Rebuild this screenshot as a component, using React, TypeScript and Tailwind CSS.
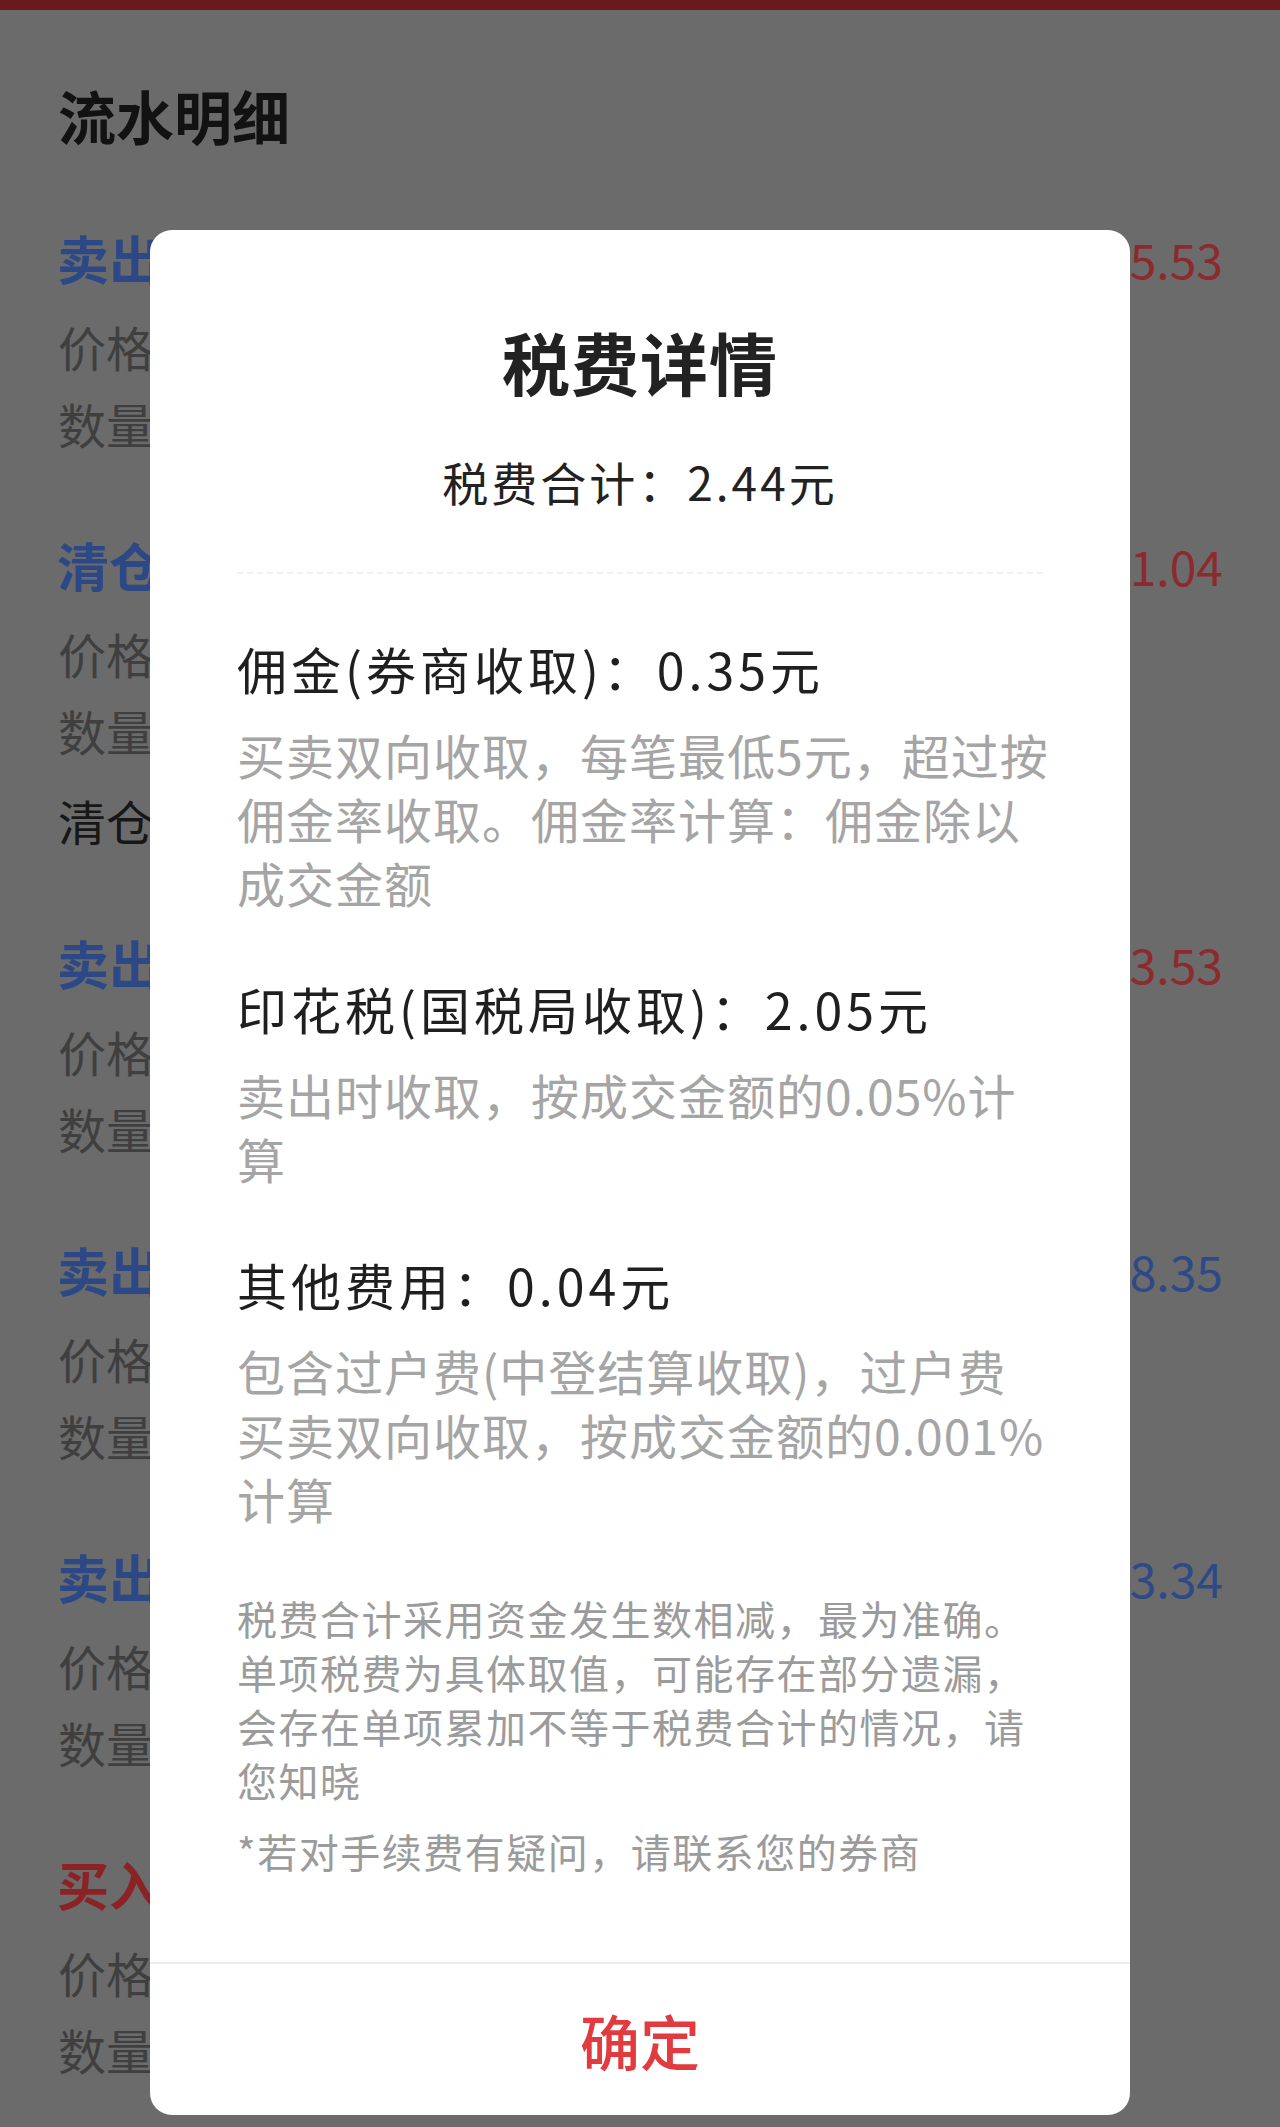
import React from "react";

type Row = {
  type: string;
  color: "blue" | "red";
  amount: string;
  amountColor: "blue" | "red";
  extra?: string;
};

const rows: Row[] = [
  { type: "卖出", color: "blue", amount: "+1,205.53", amountColor: "red" },
  { type: "清仓", color: "blue", amount: "+3,261.04", amountColor: "red", extra: "清仓收益 +126.40" },
  { type: "卖出", color: "blue", amount: "+2,113.53", amountColor: "red" },
  { type: "卖出", color: "blue", amount: "-1,048.35", amountColor: "blue" },
  { type: "卖出", color: "blue", amount: "-2,203.34", amountColor: "blue" },
  { type: "买入", color: "red", amount: "", amountColor: "red" },
];

const font = { fontFamily: '"Noto Sans CJK SC", "Noto Sans", sans-serif' };

function FeeItem({ title, lines }: { title: string; lines: string[] }) {
  return (
    <div>
      <div className="text-[50px] leading-[70px] tracking-[4px] text-[#1f1f1f] whitespace-nowrap">{title}</div>
      <div className="mt-[19px] text-[48px] leading-[64px] tracking-[1px] text-[#a5a5a5]">
        {lines.map((l, i) => (
          <div key={i} className="whitespace-nowrap">
            {l}
          </div>
        ))}
      </div>
    </div>
  );
}

export default function App() {
  return (
    <div className="relative w-[1280px] h-[2127px] overflow-hidden bg-[#6b6b6b]" style={font}>
      {/* page behind the dialog */}
      <div className="h-[10px] bg-[#691a1d]" />
      <div className="h-[200px] pl-[58px] pt-[10px] flex items-center">
        <h1 className="text-[58px] font-bold text-[#121212]">流水明细</h1>
      </div>

      {rows.map((r, i) => (
        <div key={i} className={r.extra ? "pb-[42px]" : "pb-[57px]"}>
          <div className="h-[96px] px-[57px] flex items-center justify-between">
            <span
              className={
                "text-[52px] font-bold " +
                (r.color === "blue" ? "text-[#2c4886]" : "text-[#8a2226]")
              }
            >
              {r.type}
            </span>
            <span
              className={
                "text-[48px] " +
                (r.amountColor === "blue" ? "text-[#2e4a86]" : "text-[#8c2a2e]")
              }
            >
              {r.amount}
            </span>
          </div>
          <div className="h-[80px] pl-[58px] flex items-center text-[48px] text-[#3f3f3f]">
            价格 12.36
          </div>
          <div className="h-[74px] pl-[58px] flex items-center text-[48px] text-[#3f3f3f]">
            数量 100股
          </div>
          {r.extra && (
            <div className="h-[106px] pl-[58px] flex items-center text-[48px] text-[#171717]">
              {r.extra}
            </div>
          )}
        </div>
      ))}

      {/* dialog */}
      <div className="absolute left-[150px] top-[230px] w-[980px] h-[1885px] bg-white rounded-[22px] flex flex-col">
        <div className="pt-[92px] text-center text-[68px] leading-[80px] font-bold tracking-[1px] text-[#222]">
          税费详情
        </div>
        <div className="mt-[49px] text-center text-[46px] leading-[60px] tracking-[3px] text-[#222]">
          税费合计：2.44元
        </div>
        <div className="mt-[61px] mx-[87px] border-t-2 border-dashed border-[#f0f0f0]" />

        <div className="px-[87px] mt-[59px] flex flex-col gap-[59px]">
          <FeeItem
            title="佣金(券商收取)：0.35元"
            lines={["买卖双向收取，每笔最低5元，超过按", "佣金率收取。佣金率计算：佣金除以", "成交金额"]}
          />
          <FeeItem
            title="印花税(国税局收取)：2.05元"
            lines={["卖出时收取，按成交金额的0.05%计", "算"]}
          />
          <FeeItem
            title="其他费用：0.04元"
            lines={["包含过户费(中登结算收取)，过户费", "买卖双向收取，按成交金额的0.001%", "计算"]}
          />
        </div>

        <div className="px-[87px] mt-[61px] text-[40px] leading-[54px] tracking-[1.5px] text-[#9b9b9b]">
          <div className="whitespace-nowrap">税费合计采用资金发生数相减，最为准确。</div>
          <div className="whitespace-nowrap">单项税费为具体取值，可能存在部分遗漏，</div>
          <div className="whitespace-nowrap">会存在单项累加不等于税费合计的情况，请</div>
          <div className="whitespace-nowrap">您知晓</div>
          <div className="mt-[17px] whitespace-nowrap">*若对手续费有疑问，请联系您的券商</div>
        </div>

        <button className="mt-auto h-[153px] border-t-2 border-[#ececec] flex items-center justify-center text-[60px] font-medium text-[#e23b3f]">
          确定
        </button>
      </div>
    </div>
  );
}
